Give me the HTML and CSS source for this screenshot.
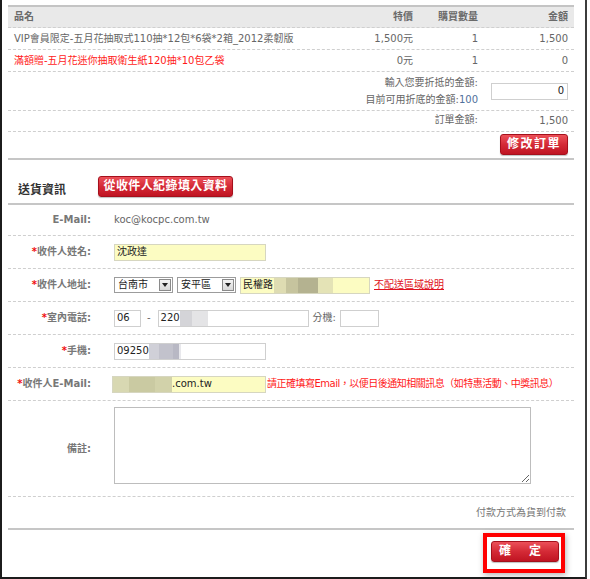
FILE: index.html
```html
<!DOCTYPE html>
<html lang="zh-Hant">
<head>
<meta charset="utf-8">
<title>訂單確認</title>
<link rel="stylesheet" href="styles.css">
</head>
<body>
<div class="frame">
  <div class="content">
    <div class="order">
      <div class="grid head">
        <div class="c name">品名</div>
        <div class="c">特價</div>
        <div class="c">購買數量</div>
        <div class="c">金額</div>
      </div>
      <div class="grid item">
        <div class="c name">VIP會員限定-五月花抽取式110抽*12包*6袋*2箱_2012柔韌版</div>
        <div class="c">1,500元</div>
        <div class="c">1</div>
        <div class="c">1,500</div>
      </div>
      <div class="grid item">
        <div class="c name red">滿額贈-五月花迷你抽取衛生紙120抽*10包乙袋</div>
        <div class="c">0元</div>
        <div class="c">1</div>
        <div class="c">0</div>
      </div>
      <div class="grid discount">
        <div class="c wide">
          <div>輸入您要折抵的金額:</div>
          <div>目前可用折底的金額:<span class="blue">100</span></div>
        </div>
        <div class="c cell-input"><span class="field amount">0</span></div>
      </div>
      <div class="grid total">
        <div class="c wide">訂單金額:</div>
        <div class="c">1,500</div>
      </div>
      <div class="actions">
        <button class="btn btn-edit">修改訂單</button>
      </div>
    </div>

    <div class="ship-head">
      <span class="ship-title">送貨資訊</span>
      <button class="btn btn-fill">從收件人紀錄填入資料</button>
    </div>

    <div class="form">
      <div class="frow email-row">
        <div class="lbl">E-Mail:</div>
        <div class="val">koc@kocpc.com.tw</div>
      </div>
      <div class="frow">
        <div class="lbl"><span class="star">*</span>收件人姓名:</div>
        <div class="val"><span class="field yellow w152">沈政達</span></div>
      </div>
      <div class="frow">
        <div class="lbl"><span class="star">*</span>收件人地址:</div>
        <div class="val addr">
          <span class="select">台南市<span class="arrow"><svg width="6" height="4" viewBox="0 0 6 4"><path d="M0 0H6L3 4Z" fill="#222"/></svg></span></span>
          <span class="select">安平區<span class="arrow"><svg width="6" height="4" viewBox="0 0 6 4"><path d="M0 0H6L3 4Z" fill="#222"/></svg></span></span>
          <span class="field yellow w130">民權路<span class="blur blur-addr"></span></span>
          <a class="link" href="#">不配送區域說明</a>
        </div>
      </div>
      <div class="frow">
        <div class="lbl"><span class="star">*</span>室內電話:</div>
        <div class="val phone">
          <span class="field w27">06</span>
          <span class="dash">-</span>
          <span class="field w151">220<span class="blur blur-phone"></span></span>
          <span class="ext">分機:</span>
          <span class="field w39"></span>
        </div>
      </div>
      <div class="frow">
        <div class="lbl"><span class="star">*</span>手機:</div>
        <div class="val"><span class="field w152">09250<span class="blur blur-mobile"></span></span></div>
      </div>
      <div class="frow">
        <div class="lbl"><span class="star">*</span>收件人E-Mail:</div>
        <div class="val mail">
          <span class="field yellow w154"><span class="blur blur-mail"></span>.com.tw</span>
          <span class="note">請正確填寫Email，以便日後通知相關訊息（如特惠活動、中獎訊息）</span>
        </div>
      </div>
      <div class="frow remark">
        <div class="lbl">備註:</div>
        <div class="val top"><textarea class="ta"></textarea></div>
      </div>
    </div>

    <div class="payment">付款方式為貨到付款</div>

    <div class="submit">
      <div class="highlight">
        <button class="btn btn-ok">確　定</button>
      </div>
    </div>
  </div>
</div>
</body>
</html>
```
FILE: styles.css
```css
html, body {
  margin: 0;
  background: #fff;
}
body {
  font-family: "DejaVu Sans", "Noto Sans CJK TC", sans-serif;
  font-size: 10px;
  line-height: 1.4;
  color: #666;
}
.frame {
  width: 583px;
  height: 577px;
  border-left: 2px solid #1c1c1c;
  border-right: 2px solid #3c3c3c;
  border-bottom: 2px solid #1c1c1c;
  background: #fff;
}
.content {
  padding: 5px 11px 0 6px;
}

/* order table */
.order {
  border-bottom: 2px solid #c6c6c6;
}
.grid {
  display: grid;
  grid-template-columns: 332px 79px 65px 90px;
  border-bottom: 1px dashed #cfcfcf;
}
.c {
  padding: 0 6px;
  text-align: right;
  white-space: nowrap;
}
.c.name {
  text-align: left;
}
.head {
  border-top: 2px solid #c4c4c4;
  background: #e9e9e9;
  height: 20px;
  line-height: 20px;
  font-weight: bold;
  color: #6a6a6a;
}
.item {
  height: 21px;
  line-height: 21px;
}
.red {
  color: #ff1a1a;
}
.discount {
  height: 38px;
  align-items: center;
}
.wide {
  grid-column: 1 / 4;
  line-height: 17px;
}
.blue {
  color: #50709c;
}
.cell-input {
  display: flex;
  justify-content: flex-end;
}
.total {
  height: 20px;
  line-height: 20px;
}
.actions {
  height: 26px;
  padding: 2px 6px 0 0;
  box-sizing: border-box;
  display: flex;
  justify-content: flex-end;
  align-items: flex-start;
}

/* buttons */
.btn {
  font-family: "DejaVu Sans", "Noto Sans CJK TC", sans-serif;
  font-size: 12px;
  font-weight: bold;
  color: #fff;
  height: 21px;
  padding: 0;
  border: 1px solid #a5101c;
  border-radius: 3px;
  background: linear-gradient(#ec5058, #d42a36 50%, #c01422);
  box-shadow: 0 1px 1px rgba(0, 0, 0, 0.25);
  line-height: 19px;
  text-align: center;
}
.btn-edit {
  width: 68px;
  letter-spacing: 1.5px;
}
.btn-fill {
  width: 135px;
  margin-left: 32px;
  letter-spacing: 0.4px;
}
.btn-ok {
  width: 68px;
  letter-spacing: 3px;
  text-align: left;
  padding-left: 7px;
}

/* shipping head */
.ship-head {
  height: 45px;
  box-sizing: border-box;
  padding: 0 0 6px 10px;
  display: flex;
  align-items: flex-end;
  border-bottom: 2px solid #c6c6c6;
}
.ship-title {
  font-size: 12px;
  font-weight: bold;
  color: #333;
  line-height: 18px;
  margin-bottom: -2px;
}

/* form */
.frow {
  display: grid;
  grid-template-columns: 89px 1fr;
  column-gap: 17px;
  align-items: center;
  min-height: 32px;
  border-bottom: 1px dashed #cfcfcf;
}
.email-row {
  min-height: 30px;
  height: 30px;
}
.lbl {
  text-align: right;
  padding-right: 6px;
  font-weight: bold;
  color: #777;
  white-space: nowrap;
}
.star {
  color: #f01010;
}
.val {
  display: flex;
  align-items: center;
  white-space: nowrap;
}
.field {
  display: inline-flex;
  align-items: center;
  height: 17px;
  box-sizing: border-box;
  border: 1px solid #cfcfcf;
  background: #fff;
  color: #222;
  padding-left: 2px;
  overflow: hidden;
}
.yellow {
  background: #fcfcc2;
  border-color: #d6d6c0;
}
.w152 { width: 152px; }
.w154 { width: 154px; margin-left: -2px; padding-left: 0; }
.w130 { width: 130px; }
.w27 { width: 27px; }
.w151 { width: 151px; }
.w39 { width: 39px; }
.amount {
  width: 77px;
  justify-content: flex-end;
  padding: 0 3px 0 0;
  margin-right: 0;
}
.addr {
  gap: 4px;
}
.select {
  display: inline-flex;
  align-items: center;
  justify-content: space-between;
  width: 59px;
  height: 16px;
  box-sizing: border-box;
  border: 1px solid #9c9c9c;
  padding-left: 3px;
  color: #222;
  background: #fff;
}
.arrow {
  width: 12px;
  height: 12px;
  box-sizing: border-box;
  margin-right: 1px;
  border: 1px solid #8a8a8a;
  background: linear-gradient(#f4f4f4, #d8d8d8);
  display: flex;
  align-items: center;
  justify-content: center;
}
.link {
  color: #e01020;
  text-decoration: underline;
}
.dash {
  margin: 0 7px 0 6px;
}
.ext {
  margin: 0 4px 0 4px;
}
.blur {
  display: inline-block;
  height: 15px;
}
.blur-addr {
  width: 59px;
  margin-left: 1px;
  background: linear-gradient(90deg, #dedcb2 0 12px, #c6c49e 12px 24px, #b4b290 24px 44px, #e4e3b6 44px 59px);
}
.blur-phone {
  width: 28px;
  background: linear-gradient(90deg, #d4d4d8 0 12px, #e4e4e6 12px 28px);
}
.blur-mobile {
  width: 32px;
  background: linear-gradient(90deg, #d0d0d8 0 10px, #c2c2cc 10px 24px, #b8b8c4 24px 30px, #e8e8ec 30px 32px);
}
.blur-mail {
  width: 59px;
  margin-right: 0;
  background: linear-gradient(90deg, #d8d8b2 0 16px, #cacaa2 16px 42px, #d2d2aa 42px 59px);
}
.note {
  color: #ff1a1a;
  margin-left: 1px;
  letter-spacing: -0.5px;
}
.remark {
  height: 95px;
}
.val.top {
  align-self: start;
  padding-top: 6px;
}
.ta {
  width: 417px;
  height: 77px;
  box-sizing: border-box;
  border: 1px solid #bdbdbd;
  margin: 0;
  padding: 2px;
  font: inherit;
  resize: both;
}

.payment {
  height: 31px;
  line-height: 31px;
  text-align: right;
  padding-right: 8px;
  border-bottom: 2px solid #c6c6c6;
  color: #777;
}
.submit {
  display: flex;
  justify-content: flex-end;
  padding: 3px 9px 0 0;
}
.highlight {
  border: 4px solid #ff0000;
  padding: 4px 2px 7px 4px;
  box-shadow: 1px 2px 6px rgba(0, 0, 0, 0.3);
}
```
